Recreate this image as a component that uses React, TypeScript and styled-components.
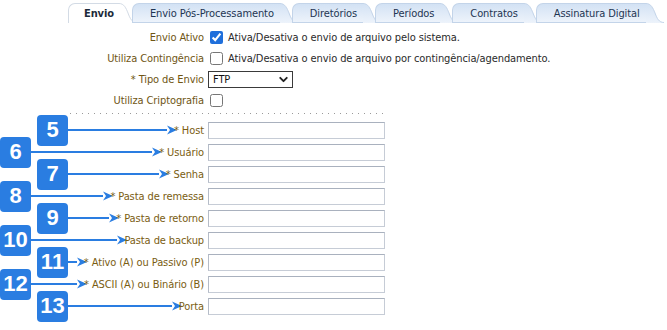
import React from 'react';
import styled, { createGlobalStyle } from 'styled-components';
import { ChevronDown } from 'lucide-react';

const GlobalStyle = createGlobalStyle`
  html, body {
    margin: 0;
    padding: 0;
    background: #ffffff;
  }
  body {
    font-family: "DejaVu Sans", Verdana, sans-serif;
    font-stretch: condensed;
    font-size: 11px;
    letter-spacing: -0.1px;
  }
`;

const Page = styled.div`
  width: 667px;
  height: 330px;
  overflow: hidden;
`;

const TabBar = styled.div`
  display: flex;
  padding: 3px 0 0 68px;
  height: 21px;
  box-sizing: border-box;
`;

const TabItem = styled.div<{ $active?: boolean }>`
  position: relative;
  display: flex;
  align-items: center;
  height: 20px;
  box-sizing: border-box;
  padding: 0 ${p => (p.$active ? 5 : 6)}px 0 ${p => (p.$active ? 15 : 17)}px;
  margin-right: ${p => (p.$active ? 13 : 12)}px;
  border: 1px solid ${p => (p.$active ? '#d3dbe5' : '#c3d4e9')};
  border-right: none;
  border-bottom: ${p => (p.$active ? 'none' : '1px solid #c3d4e9')};
  border-top-left-radius: 7px;
  background: ${p =>
    p.$active ? '#ffffff' : 'linear-gradient(to bottom, #d3e2f4, #edf3fb)'};
  color: ${p => (p.$active ? '#1c2a3a' : '#1e3552')};
  font-weight: ${p => (p.$active ? 'bold' : 'normal')};
  white-space: nowrap;
`;

const TabEar = styled.svg`
  position: absolute;
  top: -1px;
  right: -18px;
  width: 18px;
  height: 20px;
`;

const Form = styled.div`
  padding-top: 6px;
`;

const OptionRow = styled.div`
  display: flex;
  align-items: center;
  height: 21px;
`;

const Label = styled.div`
  width: 204px;
  flex-shrink: 0;
  text-align: right;
  color: #6f5514;
  white-space: nowrap;
`;

const Check = styled.input.attrs({ type: 'checkbox' })`
  width: 13px;
  height: 13px;
  margin: 0 5px 0 6px;
  accent-color: #1f6fdb;
`;

const Hint = styled.span`
  color: #2a2a2a;
  white-space: nowrap;
`;

const SelectWrap = styled.div`
  position: relative;
  margin-left: 4px;
  width: 85px;
  height: 17px;
`;

const Select = styled.select`
  appearance: none;
  width: 100%;
  height: 100%;
  box-sizing: border-box;
  border: 1px solid #3a3a3a;
  border-radius: 0;
  background: #fff;
  padding: 0 0 0 4px;
  font: inherit;
  letter-spacing: inherit;
  color: #111;
`;

const SelectChevron = styled(ChevronDown)`
  position: absolute;
  right: 3px;
  top: 2px;
  pointer-events: none;
`;

const Divider = styled.div`
  margin: 2px 0 5px 70px;
  width: 318px;
  height: 1px;
  background-image: linear-gradient(to right, #9a9a9a 1px, transparent 1px);
  background-size: 6px 1px;
`;

const FieldRow = styled.div`
  display: flex;
  align-items: center;
  height: 22px;
`;

const Marker = styled.div<{ $indent: number }>`
  width: 204px;
  flex-shrink: 0;
  display: flex;
  align-items: center;
  padding-left: ${p => p.$indent}px;
  box-sizing: border-box;
`;

const Badge = styled.div`
  width: 31px;
  height: 31px;
  flex-shrink: 0;
  border-radius: 4px;
  background: #2a7de1;
  color: #fff;
  display: flex;
  align-items: center;
  justify-content: center;
  font-family: "Liberation Sans", Arial, sans-serif;
  font-stretch: normal;
  letter-spacing: 0;
  font-weight: bold;
  font-size: 22px;
`;

const Lead = styled.div`
  flex: 1;
  height: 2px;
  background: #2a7de1;
`;

const Head = styled.svg`
  width: 10px;
  height: 10px;
  flex-shrink: 0;
`;

const FieldLabel = styled.span`
  margin-left: -3px;
  color: #7a5d12;
  white-space: nowrap;
`;

const TextInput = styled.input.attrs({ type: 'text' })`
  width: 177px;
  height: 17px;
  box-sizing: border-box;
  margin: 0 0 0 4px;
  border: 1px solid #c6ccd6;
  border-top-color: #a9b1be;
  border-left-color: #b5bcc8;
  background: #fff;
  padding: 0 3px;
  font: inherit;
`;

const tabs = [
  'Envio',
  'Envio Pós-Processamento',
  'Diretórios',
  'Períodos',
  'Contratos',
  'Assinatura Digital',
];

const fields = [
  { n: 5, label: '* Host' },
  { n: 6, label: '* Usuário' },
  { n: 7, label: '* Senha' },
  { n: 8, label: '* Pasta de remessa' },
  { n: 9, label: '* Pasta de retorno' },
  { n: 10, label: 'Pasta de backup' },
  { n: 11, label: '* Ativo (A) ou Passivo (P)' },
  { n: 12, label: '* ASCII (A) ou Binário (B)' },
  { n: 13, label: 'Porta' },
];

function Tab({ label, active }: { label: string; active?: boolean }) {
  const id = `ear-${label.length}`;
  return (
    <TabItem $active={active}>
      {label}
      <TabEar viewBox="0 0 18 20">
        <defs>
          <linearGradient id={id} x1="0" y1="0" x2="0" y2="1">
            <stop offset="0" stopColor={active ? '#fff' : '#d3e2f4'} />
            <stop offset="1" stopColor={active ? '#fff' : '#edf3fb'} />
          </linearGradient>
        </defs>
        <path
          d="M0,0.5 C5,0.5 7,5 9,10 C11,15.5 13,19.5 18,19.5 L18,20 L0,20 Z"
          fill={`url(#${id})`}
        />
        <path
          d="M0,0.5 C5,0.5 7,5 9,10 C11,15.5 13,19.5 18,19.5"
          fill="none"
          stroke={active ? '#d3dbe5' : '#c3d4e9'}
          strokeWidth="1"
        />
      </TabEar>
    </TabItem>
  );
}

export default function App() {
  return (
    <Page>
      <GlobalStyle />
      <TabBar>
        {tabs.map((t, i) => (
          <Tab key={t} label={t} active={i === 0} />
        ))}
      </TabBar>

      <Form>
        <OptionRow>
          <Label>Envio Ativo</Label>
          <Check defaultChecked />
          <Hint>Ativa/Desativa o envio de arquivo pelo sistema.</Hint>
        </OptionRow>
        <OptionRow>
          <Label>Utiliza Contingência</Label>
          <Check />
          <Hint>Ativa/Desativa o envio de arquivo por contingência/agendamento.</Hint>
        </OptionRow>
        <OptionRow>
          <Label>* Tipo de Envio</Label>
          <SelectWrap>
            <Select defaultValue="FTP">
              <option value="FTP">FTP</option>
              <option value="SFTP">SFTP</option>
            </Select>
            <SelectChevron size={13} strokeWidth={3.5} color="#222" />
          </SelectWrap>
        </OptionRow>
        <OptionRow>
          <Label>Utiliza Criptografia</Label>
          <Check />
        </OptionRow>

        <Divider />

        {fields.map(f => (
          <FieldRow key={f.n}>
            <Marker $indent={f.n % 2 ? 37 : 0}>
              <Badge>{f.n}</Badge>
              <Lead />
              <Head viewBox="0 0 10 10">
                <path d="M0,0.5 L10,5 L0,9.5 L3,5 Z" fill="#2a7de1" />
              </Head>
              <FieldLabel>{f.label}</FieldLabel>
            </Marker>
            <TextInput />
          </FieldRow>
        ))}
      </Form>
    </Page>
  );
}
